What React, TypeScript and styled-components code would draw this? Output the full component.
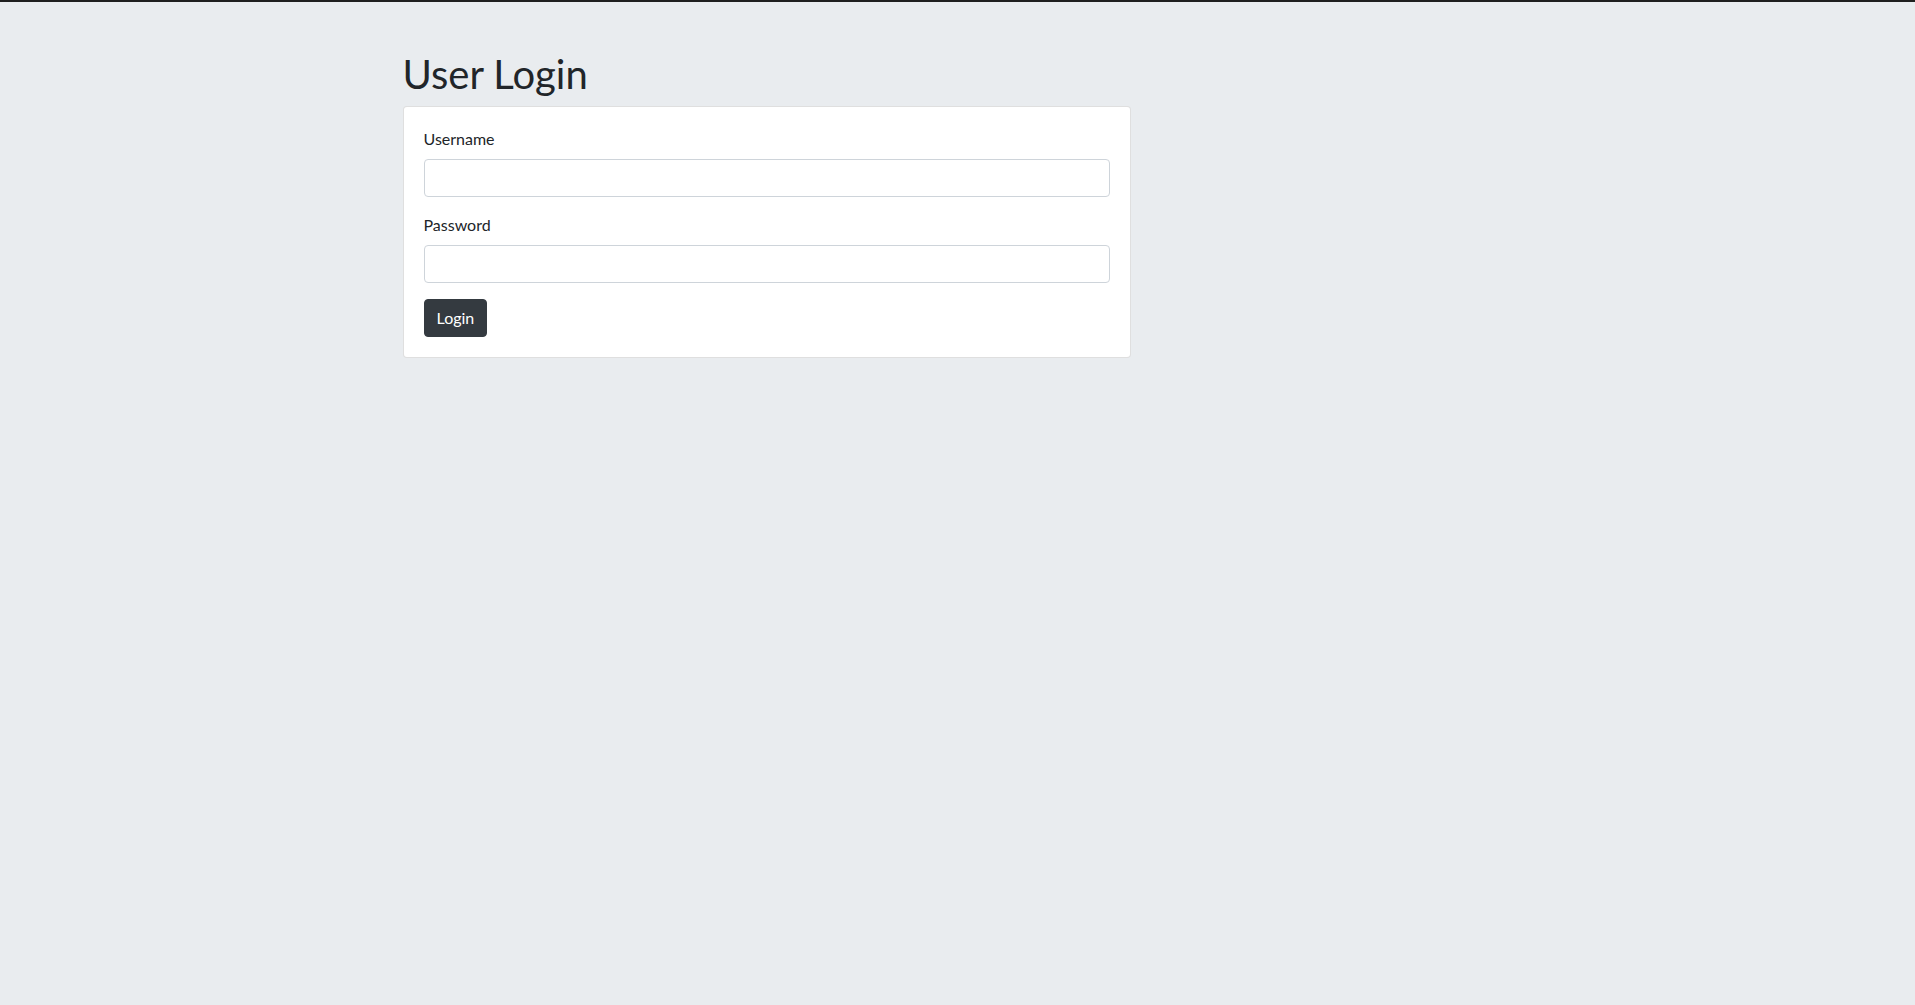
import styled, { createGlobalStyle } from 'styled-components';

const GlobalStyle = createGlobalStyle`
  html, body {
    margin: 0;
    padding: 0;
    background: #e9ecef;
    font-family: 'Segoe UI', Lato, 'Open Sans', Arial, sans-serif;
    color: #212529;
    font-size: 16px;
    line-height: 1.5;
  }
  * {
    box-sizing: border-box;
  }
`;

const Page = styled.div`
  min-height: 100vh;
  border-top: 2px solid #1f1f1f;
`;

const Container = styled.div`
  max-width: 1140px;
  margin: 0 auto;
  padding: 48px 15px 0;
`;

const Title = styled.h1`
  margin: 0 0 8px;
  font-size: 40px;
  font-weight: 400;
  line-height: 1.2;
  color: #212529;
`;

const Card = styled.div`
  width: 728px;
  background: #fff;
  border: 1px solid rgba(0, 0, 0, 0.125);
  border-radius: 4px;
  padding: 20px;
`;

const FormGroup = styled.div`
  margin-bottom: 16px;
`;

const Label = styled.label`
  display: block;
  margin-bottom: 8px;
  font-size: 16px;
  line-height: 24px;
`;

const Input = styled.input`
  display: block;
  width: 100%;
  height: 38px;
  padding: 6px 12px;
  font: inherit;
  color: #495057;
  background: #fff;
  border: 1px solid #ced4da;
  border-radius: 4px;
  outline: none;
`;

const Button = styled.button`
  display: block;
  height: 38px;
  padding: 6px 12px;
  font: inherit;
  line-height: 24px;
  color: #fff;
  background: #343a40;
  border: 1px solid #343a40;
  border-radius: 4px;
  cursor: pointer;
`;

export default function App(): JSX.Element {
  return (
    <Page>
      <GlobalStyle />
      <Container>
        <Title>User Login</Title>
        <Card>
          <form onSubmit={e => e.preventDefault()}>
            <FormGroup>
              <Label htmlFor='username'>Username</Label>
              <Input id='username' type='text' />
            </FormGroup>
            <FormGroup>
              <Label htmlFor='password'>Password</Label>
              <Input id='password' type='password' />
            </FormGroup>
            <Button type='submit'>Login</Button>
          </form>
        </Card>
      </Container>
    </Page>
  );
}
